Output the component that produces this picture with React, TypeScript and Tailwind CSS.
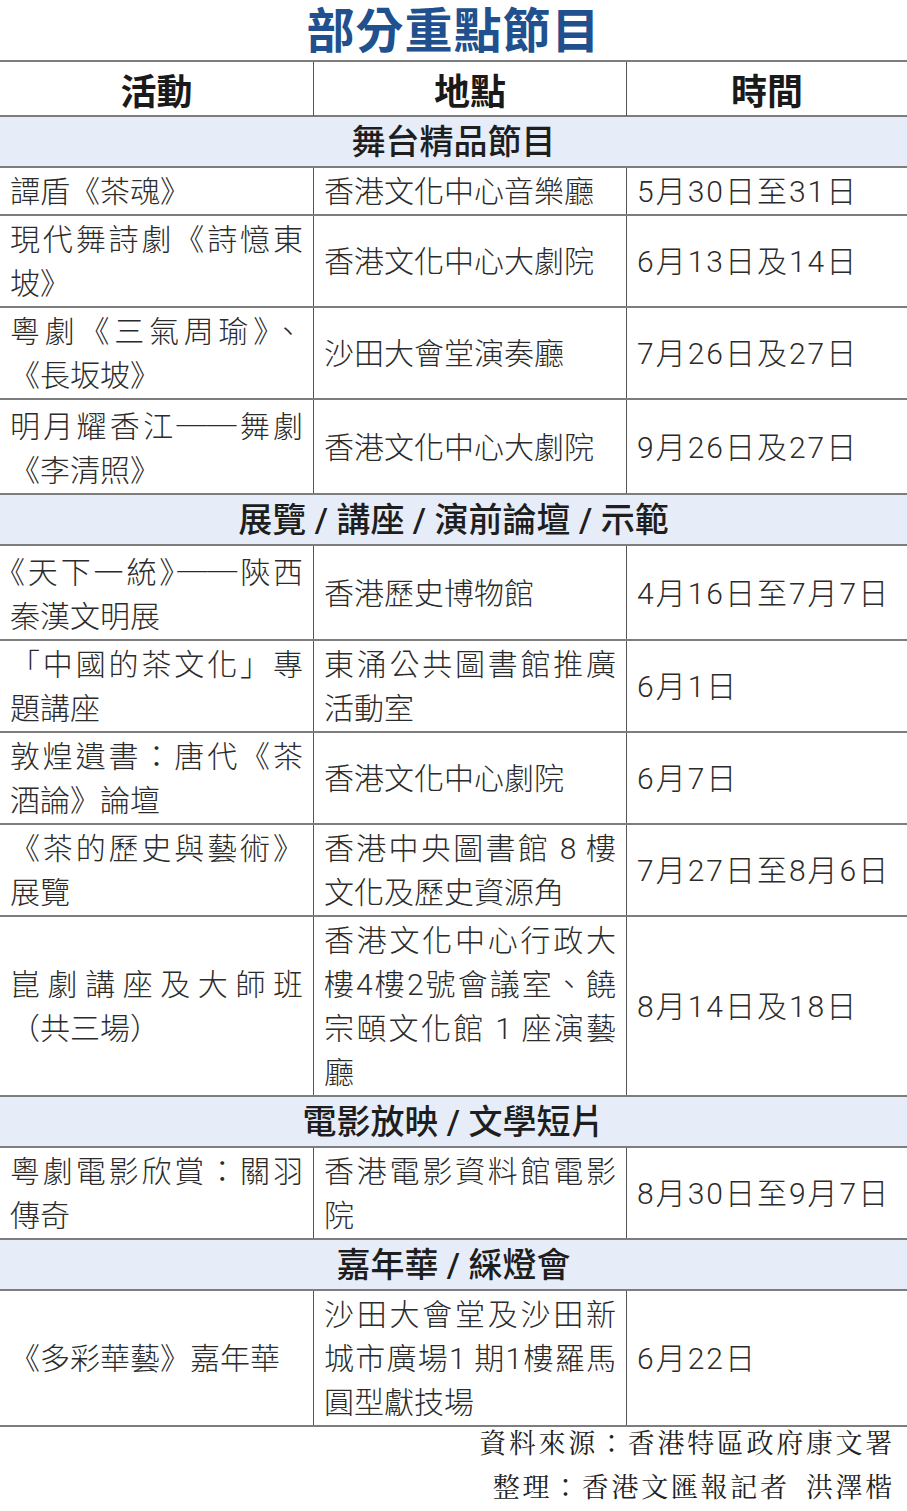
import React from "react";

type Line = { t: React.ReactNode; j?: boolean; halt?: boolean };

const Dash = () => <span className="font-['Noto_Sans_CJK_TC',sans-serif]">──</span>;

function Cell({ lines, last = false, date = false }: { lines: Line[]; last?: boolean; date?: boolean }) {
  return (
    <div
      className={
        (last ? "" : "border-r border-[#555555] ") +
        (date ? "tracking-[2px] " : "") +
        "flex flex-col justify-center px-[10px] pt-[2px] pb-0"
      }
    >
      {lines.map((l, i) => (
        <div
          key={i}
          className={
            (l.j ? "text-justify [text-align-last:justify] " : "text-left ") +
            (l.halt ? "[font-feature-settings:'halt'] " : "") +
            "leading-[44px]"
          }
        >
          {l.t}
        </div>
      ))}
    </div>
  );
}

function Row({ a, b, c }: { a: Line[]; b: Line[]; c: string }) {
  return (
    <div className="grid grid-cols-[314px_313px_1fr] border-b-2 border-[#7d7d7d]">
      <Cell lines={a} />
      <Cell lines={b} />
      <Cell lines={[{ t: c }]} last date />
    </div>
  );
}

function Section({ title }: { title: string }) {
  return (
    <div className="h-[51px] bg-[#e6edf8] border-b-2 border-[#7d7d7d] flex items-center justify-center text-[34px] font-medium text-[#1e1e1e] font-['Roboto','Noto_Sans_CJK_TC',sans-serif] leading-none">
      {title}
    </div>
  );
}

const s = (t: React.ReactNode): Line => ({ t });
const j = (t: React.ReactNode): Line => ({ t, j: true });

export default function App() {
  return (
    <div className="w-[907px] bg-white text-[#2b2b2b] font-['Roboto','Noto_Sans_CJK_TC',sans-serif]">
      <div className="h-[60px] flex justify-center">
        <div className="text-[48px] leading-[54px] tracking-[1px] font-bold text-[#21508e] font-['Noto_Sans_CJK_TC',sans-serif]">
          部分重點節目
        </div>
      </div>
      <div className="border-t-2 border-[#7d7d7d]">
        <div className="grid grid-cols-[314px_313px_1fr] h-[55px] border-b-2 border-[#7d7d7d] text-[36px] font-bold text-[#1a1a1a] font-['Noto_Sans_CJK_TC',sans-serif]">
          <div className="border-r border-[#555555] flex items-center justify-center">活動</div>
          <div className="border-r border-[#555555] flex items-center justify-center">地點</div>
          <div className="flex items-center justify-center">時間</div>
        </div>

        <div className="text-[30px] font-light">
          <Section title="舞台精品節目" />
          <Row a={[s("譚盾《茶魂》")]} b={[s("香港文化中心音樂廳")]} c="5月30日至31日" />
          <Row a={[j("現代舞詩劇《詩憶東"), s("坡》")]} b={[s("香港文化中心大劇院")]} c="6月13日及14日" />
          <Row a={[j("粵劇《三氣周瑜》、"), s("《長坂坡》")]} b={[s("沙田大會堂演奏廳")]} c="7月26日及27日" />
          <Row
            a={[j(<>明月耀香江<Dash />舞劇</>), s("《李清照》")]}
            b={[s("香港文化中心大劇院")]}
            c="9月26日及27日"
          />
          <Section title="展覽 / 講座 / 演前論壇 / 示範" />
          <Row
            a={[{ t: <>《天下一統》<Dash />陝西</>, j: true, halt: true }, s("秦漢文明展")]}
            b={[s("香港歷史博物館")]}
            c="4月16日至7月7日"
          />
          <Row a={[j("「中國的茶文化」專"), s("題講座")]} b={[j("東涌公共圖書館推廣"), s("活動室")]} c="6月1日" />
          <Row a={[j("敦煌遺書：唐代《茶"), s("酒論》論壇")]} b={[s("香港文化中心劇院")]} c="6月7日" />
          <Row a={[j("《茶的歷史與藝術》"), s("展覽")]} b={[j("香港中央圖書館 8 樓"), s("文化及歷史資源角")]} c="7月27日至8月6日" />
          <Row
            a={[j("崑劇講座及大師班"), s("（共三場）")]}
            b={[j("香港文化中心行政大"), j("樓4樓2號會議室、饒"), j("宗頤文化館 1 座演藝"), s("廳")]}
            c="8月14日及18日"
          />
          <Section title="電影放映 / 文學短片" />
          <Row a={[j("粵劇電影欣賞：關羽"), s("傳奇")]} b={[j("香港電影資料館電影"), s("院")]} c="8月30日至9月7日" />
          <Section title="嘉年華 / 綵燈會" />
          <Row
            a={[s("《多彩華藝》嘉年華")]}
            b={[j("沙田大會堂及沙田新"), j("城市廣場1 期1樓羅馬"), s("圓型獻技場")]}
            c="6月22日"
          />
        </div>
      </div>
      <div className="flex flex-col items-end gap-[14px] pr-[12px] pb-[6px] text-[27px] leading-[30px] tracking-[2.7px] text-[#222222] font-['Noto_Serif_CJK_TC','Noto_Sans_CJK_TC',serif]">
        <div>資料來源：香港特區政府康文署</div>
        <div>整理：香港文匯報記者&ensp;洪澤楷</div>
      </div>
    </div>
  );
}
